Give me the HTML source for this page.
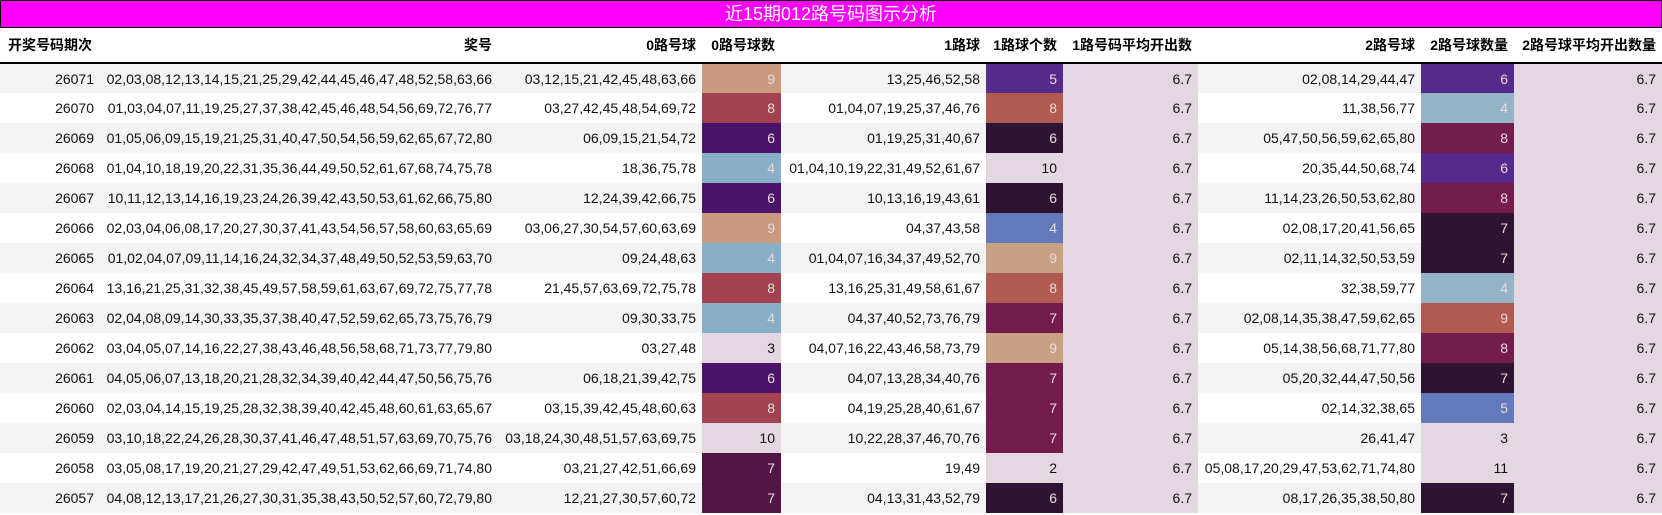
<!DOCTYPE html>
<html><head><meta charset="utf-8">
<style>
*{margin:0;padding:0;box-sizing:border-box}
body{width:1662px;height:515px;background:#fff;font-family:"Liberation Sans","Noto Sans CJK SC",sans-serif;overflow:hidden}
.title{height:28px;background:#ff00ff;border:1px solid #000;color:#fff;font-size:18px;text-align:center;line-height:26px}
table{border-collapse:collapse;table-layout:fixed;width:1662px}
th{height:35px;font-size:14px;font-weight:bold;text-align:right;padding-right:6px;border-bottom:2px solid #000;white-space:nowrap;color:#000}
th:first-child{text-align:left;padding-left:8px}
td{height:30px;font-size:14px;text-align:right;padding-right:6px;white-space:nowrap;color:#111}
tr:nth-child(odd) td{background:#f3f3f3}
tr:nth-child(even) td{background:#fff}
td.a{background:#e3d7e2!important}
td.c{color:#eadada}
</style></head><body>
<div class="title">近15期012路号码图示分析</div>
<table>
<colgroup><col style="width:100px"><col style="width:398px"><col style="width:204px"><col style="width:79px"><col style="width:205px"><col style="width:77px"><col style="width:135px"><col style="width:223px"><col style="width:93px"><col style="width:148px"></colgroup>
<thead><tr><th>开奖号码期次</th><th>奖号</th><th>0路号球</th><th>0路号球数</th><th>1路球</th><th>1路球个数</th><th>1路号码平均开出数</th><th>2路号球</th><th>2路号球数量</th><th>2路号球平均开出数量</th></tr></thead>
<tbody>
<tr><td>26071</td><td>02,03,08,12,13,14,15,21,25,29,42,44,45,46,47,48,52,58,63,66</td><td>03,12,15,21,42,45,48,63,66</td><td class="c" style="background:#c99a80">9</td><td>13,25,46,52,58</td><td class="c" style="background:#572b8d">5</td><td class="a">6.7</td><td>02,08,14,29,44,47</td><td class="c" style="background:#552a8d">6</td><td class="a">6.7</td></tr>
<tr><td>26070</td><td>01,03,04,07,11,19,25,27,37,38,42,45,46,48,54,56,69,72,76,77</td><td>03,27,42,45,48,54,69,72</td><td class="c" style="background:#a3434f">8</td><td>01,04,07,19,25,37,46,76</td><td class="c" style="background:#b05a52">8</td><td class="a">6.7</td><td>11,38,56,77</td><td class="c" style="background:#95b3c6">4</td><td class="a">6.7</td></tr>
<tr><td>26069</td><td>01,05,06,09,15,19,21,25,31,40,47,50,54,56,59,62,65,67,72,80</td><td>06,09,15,21,54,72</td><td class="c" style="background:#4b136a">6</td><td>01,19,25,31,40,67</td><td class="c" style="background:#2e1432">6</td><td class="a">6.7</td><td>05,47,50,56,59,62,65,80</td><td class="c" style="background:#741c4b">8</td><td class="a">6.7</td></tr>
<tr><td>26068</td><td>01,04,10,18,19,20,22,31,35,36,44,49,50,52,61,67,68,74,75,78</td><td>18,36,75,78</td><td class="c" style="background:#89aec7">4</td><td>01,04,10,19,22,31,49,52,61,67</td><td class="a">10</td><td class="a">6.7</td><td>20,35,44,50,68,74</td><td class="c" style="background:#552a8d">6</td><td class="a">6.7</td></tr>
<tr><td>26067</td><td>10,11,12,13,14,16,19,23,24,26,39,42,43,50,53,61,62,66,75,80</td><td>12,24,39,42,66,75</td><td class="c" style="background:#4b136a">6</td><td>10,13,16,19,43,61</td><td class="c" style="background:#2e1432">6</td><td class="a">6.7</td><td>11,14,23,26,50,53,62,80</td><td class="c" style="background:#741c4b">8</td><td class="a">6.7</td></tr>
<tr><td>26066</td><td>02,03,04,06,08,17,20,27,30,37,41,43,54,56,57,58,60,63,65,69</td><td>03,06,27,30,54,57,60,63,69</td><td class="c" style="background:#c99a80">9</td><td>04,37,43,58</td><td class="c" style="background:#6479bc">4</td><td class="a">6.7</td><td>02,08,17,20,41,56,65</td><td class="c" style="background:#2e1432">7</td><td class="a">6.7</td></tr>
<tr><td>26065</td><td>01,02,04,07,09,11,14,16,24,32,34,37,48,49,50,52,53,59,63,70</td><td>09,24,48,63</td><td class="c" style="background:#89aec7">4</td><td>01,04,07,16,34,37,49,52,70</td><td class="c" style="background:#c9a084">9</td><td class="a">6.7</td><td>02,11,14,32,50,53,59</td><td class="c" style="background:#2e1432">7</td><td class="a">6.7</td></tr>
<tr><td>26064</td><td>13,16,21,25,31,32,38,45,49,57,58,59,61,63,67,69,72,75,77,78</td><td>21,45,57,63,69,72,75,78</td><td class="c" style="background:#a3434f">8</td><td>13,16,25,31,49,58,61,67</td><td class="c" style="background:#b05a52">8</td><td class="a">6.7</td><td>32,38,59,77</td><td class="c" style="background:#95b3c6">4</td><td class="a">6.7</td></tr>
<tr><td>26063</td><td>02,04,08,09,14,30,33,35,37,38,40,47,52,59,62,65,73,75,76,79</td><td>09,30,33,75</td><td class="c" style="background:#89aec7">4</td><td>04,37,40,52,73,76,79</td><td class="c" style="background:#731c4b">7</td><td class="a">6.7</td><td>02,08,14,35,38,47,59,62,65</td><td class="c" style="background:#b05a52">9</td><td class="a">6.7</td></tr>
<tr><td>26062</td><td>03,04,05,07,14,16,22,27,38,43,46,48,56,58,68,71,73,77,79,80</td><td>03,27,48</td><td class="a">3</td><td>04,07,16,22,43,46,58,73,79</td><td class="c" style="background:#c9a084">9</td><td class="a">6.7</td><td>05,14,38,56,68,71,77,80</td><td class="c" style="background:#741c4b">8</td><td class="a">6.7</td></tr>
<tr><td>26061</td><td>04,05,06,07,13,18,20,21,28,32,34,39,40,42,44,47,50,56,75,76</td><td>06,18,21,39,42,75</td><td class="c" style="background:#4b136a">6</td><td>04,07,13,28,34,40,76</td><td class="c" style="background:#731c4b">7</td><td class="a">6.7</td><td>05,20,32,44,47,50,56</td><td class="c" style="background:#2e1432">7</td><td class="a">6.7</td></tr>
<tr><td>26060</td><td>02,03,04,14,15,19,25,28,32,38,39,40,42,45,48,60,61,63,65,67</td><td>03,15,39,42,45,48,60,63</td><td class="c" style="background:#a3434f">8</td><td>04,19,25,28,40,61,67</td><td class="c" style="background:#731c4b">7</td><td class="a">6.7</td><td>02,14,32,38,65</td><td class="c" style="background:#6479bc">5</td><td class="a">6.7</td></tr>
<tr><td>26059</td><td>03,10,18,22,24,26,28,30,37,41,46,47,48,51,57,63,69,70,75,76</td><td>03,18,24,30,48,51,57,63,69,75</td><td class="a">10</td><td>10,22,28,37,46,70,76</td><td class="c" style="background:#731c4b">7</td><td class="a">6.7</td><td>26,41,47</td><td class="a">3</td><td class="a">6.7</td></tr>
<tr><td>26058</td><td>03,05,08,17,19,20,21,27,29,42,47,49,51,53,62,66,69,71,74,80</td><td>03,21,27,42,51,66,69</td><td class="c" style="background:#521545">7</td><td>19,49</td><td class="a">2</td><td class="a">6.7</td><td>05,08,17,20,29,47,53,62,71,74,80</td><td class="a">11</td><td class="a">6.7</td></tr>
<tr><td>26057</td><td>04,08,12,13,17,21,26,27,30,31,35,38,43,50,52,57,60,72,79,80</td><td>12,21,27,30,57,60,72</td><td class="c" style="background:#521545">7</td><td>04,13,31,43,52,79</td><td class="c" style="background:#2e1432">6</td><td class="a">6.7</td><td>08,17,26,35,38,50,80</td><td class="c" style="background:#2e1432">7</td><td class="a">6.7</td></tr>
</tbody></table>
</body></html>
